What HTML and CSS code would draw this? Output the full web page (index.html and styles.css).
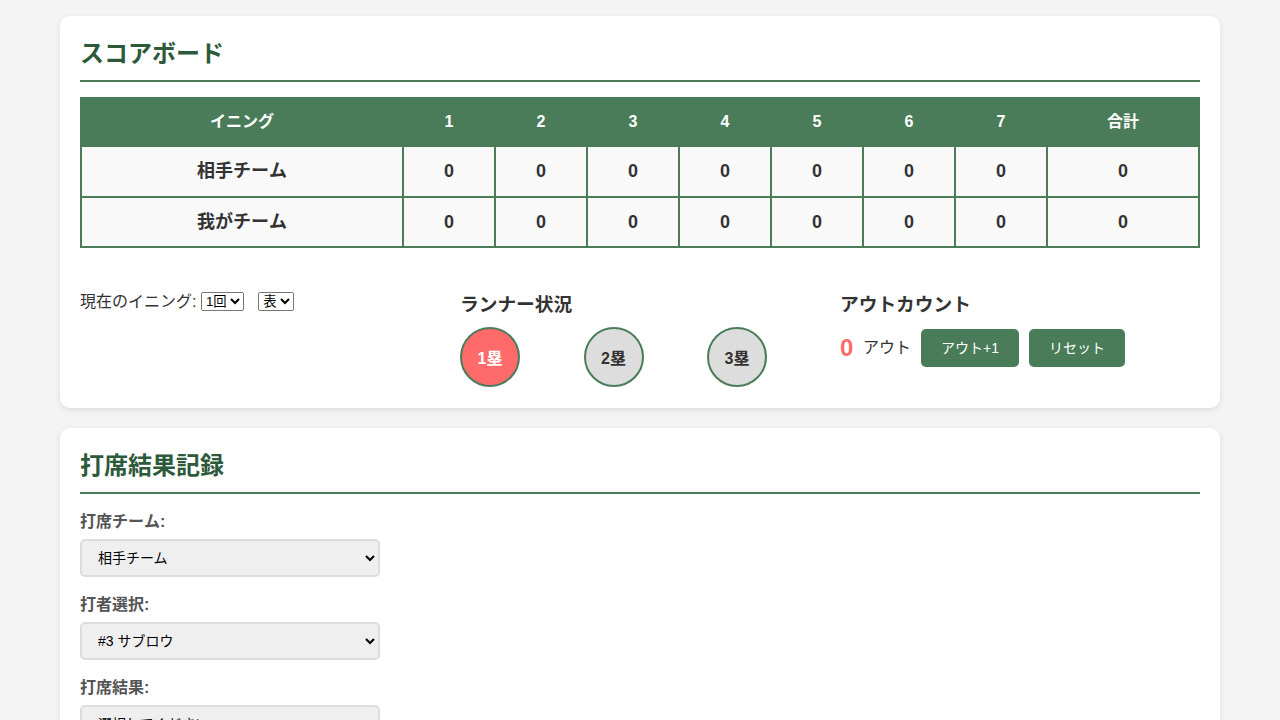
FILE: index.html
```html
<!DOCTYPE html>
<html lang="ja">
<head>
<meta charset="utf-8">
<title>スコアボード</title>
<link rel="stylesheet" href="styles.css">
</head>
<body>
<div class="container">
  <section class="card card-score">
    <h2 class="card-title">スコアボード</h2>
    <table class="score-table">
      <colgroup>
        <col class="c-team"><col class="c-inn"><col class="c-inn"><col class="c-inn"><col class="c-inn"><col class="c-inn"><col class="c-inn"><col class="c-inn"><col class="c-total">
      </colgroup>
      <thead>
        <tr><th>イニング</th><th>1</th><th>2</th><th>3</th><th>4</th><th>5</th><th>6</th><th>7</th><th>合計</th></tr>
      </thead>
      <tbody>
        <tr><td>相手チーム</td><td>0</td><td>0</td><td>0</td><td>0</td><td>0</td><td>0</td><td>0</td><td>0</td></tr>
        <tr><td>我がチーム</td><td>0</td><td>0</td><td>0</td><td>0</td><td>0</td><td>0</td><td>0</td><td>0</td></tr>
      </tbody>
    </table>

    <div class="status-grid">
      <div class="inning-ctrl">
        <label>現在のイニング:</label>
        <select class="mini-select"><option>1回</option></select>
        <select class="mini-select second"><option>表</option></select>
      </div>
      <div class="runners">
        <h3 class="sub-title">ランナー状況</h3>
        <div class="bases">
          <div class="base active">1塁</div>
          <div class="base">2塁</div>
          <div class="base">3塁</div>
        </div>
      </div>
      <div class="outs">
        <h3 class="sub-title">アウトカウント</h3>
        <div class="out-row">
          <span class="out-num">0</span>
          <span class="out-label">アウト</span>
          <button class="btn">アウト+1</button>
          <button class="btn">リセット</button>
        </div>
      </div>
    </div>
  </section>

  <section class="card">
    <h2 class="card-title">打席結果記録</h2>
    <div class="form-group">
      <label class="form-label">打席チーム:</label>
      <select class="form-select"><option>相手チーム</option></select>
    </div>
    <div class="form-group">
      <label class="form-label">打者選択:</label>
      <select class="form-select"><option>#3 サブロウ</option></select>
    </div>
    <div class="form-group">
      <label class="form-label">打席結果:</label>
      <select class="form-select"><option>選択してください</option></select>
    </div>
  </section>
</div>
</body>
</html>
```

FILE: styles.css
```css
* { box-sizing: border-box; }

body {
  margin: 0;
  background: #f4f4f4;
  color: #333;
  font-family: "Liberation Sans", "Noto Sans CJK JP", sans-serif;
  font-size: 16px;
  font-kerning: none;
}

.container {
  width: 1160px;
  margin: 0 auto;
  padding-top: 16px;
}

.card {
  background: #fff;
  border-radius: 10px;
  box-shadow: 0 2px 6px rgba(0, 0, 0, 0.1);
  padding: 20px;
  margin-bottom: 20px;
}
.card-score { padding-bottom: 21px; }

.card-title {
  margin: 0 0 15px;
  font-size: 24px;
  line-height: 36px;
  font-weight: bold;
  color: #2d5a3a;
  padding-bottom: 8px;
  border-bottom: 2px solid #4a7c59;
}

.score-table {
  width: 100%;
  border-collapse: collapse;
  table-layout: fixed;
}
.c-team { width: 322px; }
.c-inn { width: 92px; }

.score-table th,
.score-table td {
  border: 2px solid #4a7c59;
  text-align: center;
  font-weight: bold;
  font-size: 16px;
  line-height: 24px;
}
.score-table th {
  background: #4a7c59;
  color: #fff;
  padding: 11px 8px;
}
.score-table td {
  background: #f9f9f9;
  color: #333;
  font-size: 18px;
  line-height: 25px;
  padding: 12px 8px;
}
.score-table tbody tr:last-child td {
  line-height: 24px;
}

.status-grid {
  display: grid;
  grid-template-columns: repeat(3, 1fr);
  gap: 20px;
  margin-top: 44px;
}

.inning-ctrl {
  line-height: 19px;
}
.inning-ctrl label { color: #333; }
.mini-select {
  font-family: "Liberation Sans", "Noto Sans CJK JP", sans-serif;
  font-size: 13.33px;
  margin-left: 0;
  vertical-align: 1px;
}
.mini-select.second { margin-left: 10px; }

.sub-title {
  margin: 0 0 9px;
  font-size: 18.72px;
  line-height: 26px;
  font-weight: bold;
  color: #333;
}

.bases {
  display: flex;
  gap: 63.5px;
}
.base {
  width: 60px;
  height: 60px;
  border-radius: 50%;
  border: 2px solid #4a7c59;
  background: #ddd;
  display: flex;
  align-items: center;
  justify-content: center;
  font-weight: bold;
  font-size: 16px;
  color: #333;
}
.base.active {
  background: #ff6b6b;
  color: #fff;
}

.out-row {
  display: flex;
  align-items: center;
  gap: 10px;
  margin-top: 11px;
}
.out-num {
  color: #ff6b6b;
  font-size: 24px;
  line-height: 28px;
  font-weight: bold;
  width: 13px;
}
.out-label {
  font-size: 16px;
  line-height: 24px;
  color: #333;
}
.btn {
  background: #4a7c59;
  color: #fff;
  border: none;
  border-radius: 5px;
  font-family: "Liberation Sans", "Noto Sans CJK JP", sans-serif;
  font-size: 14px;
  line-height: 18px;
  padding: 10px 20px;
  cursor: pointer;
}

.form-group { margin-bottom: 16px; }
.form-label {
  display: block;
  font-weight: bold;
  color: #555;
  line-height: 24px;
  margin-bottom: 5px;
}
.card-title + .form-group { margin-top: 16px; }
.form-select {
  display: block;
  width: 300px;
  height: 38px;
  padding: 8px 12px;
  background: #efefef;
  border: 2px solid #ddd;
  border-radius: 5px;
  font-family: "Liberation Sans", "Noto Sans CJK JP", sans-serif;
  font-size: 14px;
  color: #000;
}
```
